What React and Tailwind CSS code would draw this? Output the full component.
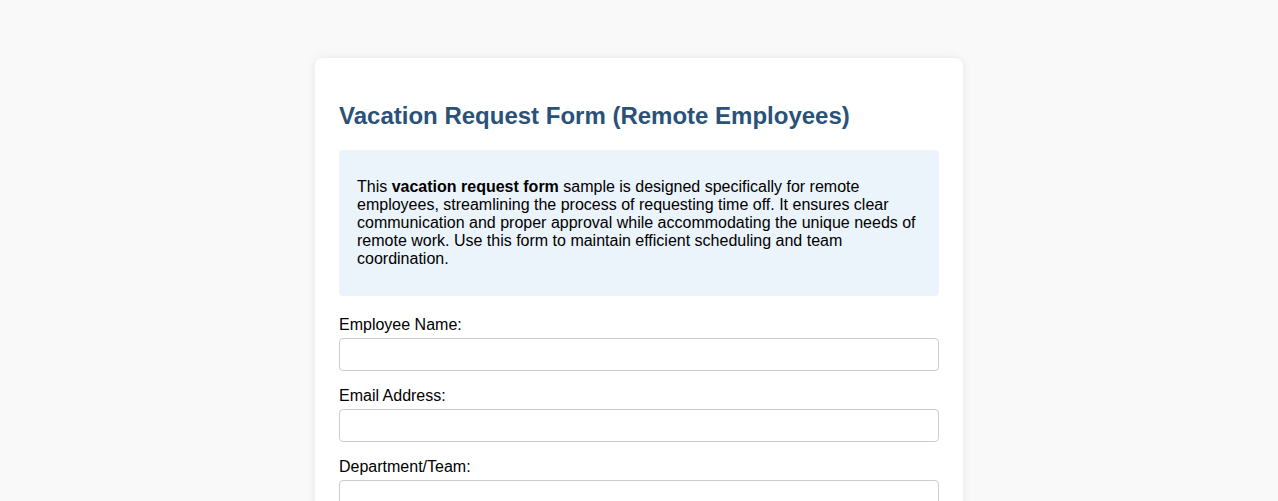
export default function App() {
  const fields = ["Employee Name:", "Email Address:", "Department/Team:", "Manager Name:", "Start Date:", "End Date:"]

  return (
    <div className="min-h-screen bg-[#f9f9f9] pt-[58px] pb-10 font-['Liberation_Sans',Arial,sans-serif] text-black">
      <div className="mx-auto w-[648px] rounded-lg bg-white px-6 pt-6 pb-6 shadow-[0_0_10px_rgba(0,0,0,0.08)]">
        {/* Title */}
        <h2 className="mt-5 mb-5 text-[24px] font-bold leading-[28px] text-[#2a5279]">
          Vacation Request Form (Remote Employees)
        </h2>

        {/* Intro box */}
        <div className="mb-[19px] rounded bg-[#ebf3fb] px-[18px] pt-[28px] pb-[28px]">
          <p className="text-[16px] leading-[18px]">
            This <strong>vacation request form</strong> sample is designed specifically for remote
            employees, streamlining the process of requesting time off. It ensures clear
            communication and proper approval while accommodating the unique needs of
            remote work. Use this form to maintain efficient scheduling and team
            coordination.
          </p>
        </div>

        {/* Fields */}
        {fields.map((label) => (
          <div key={label} className="mb-[15px]">
            <label className="mb-[4px] block text-[16px] leading-[19px]">{label}</label>
            <input
              type="text"
              className="block h-[33px] w-full rounded border border-[#cccccc] px-2 text-[14px] outline-none"
            />
          </div>
        ))}
      </div>
    </div>
  )
}
